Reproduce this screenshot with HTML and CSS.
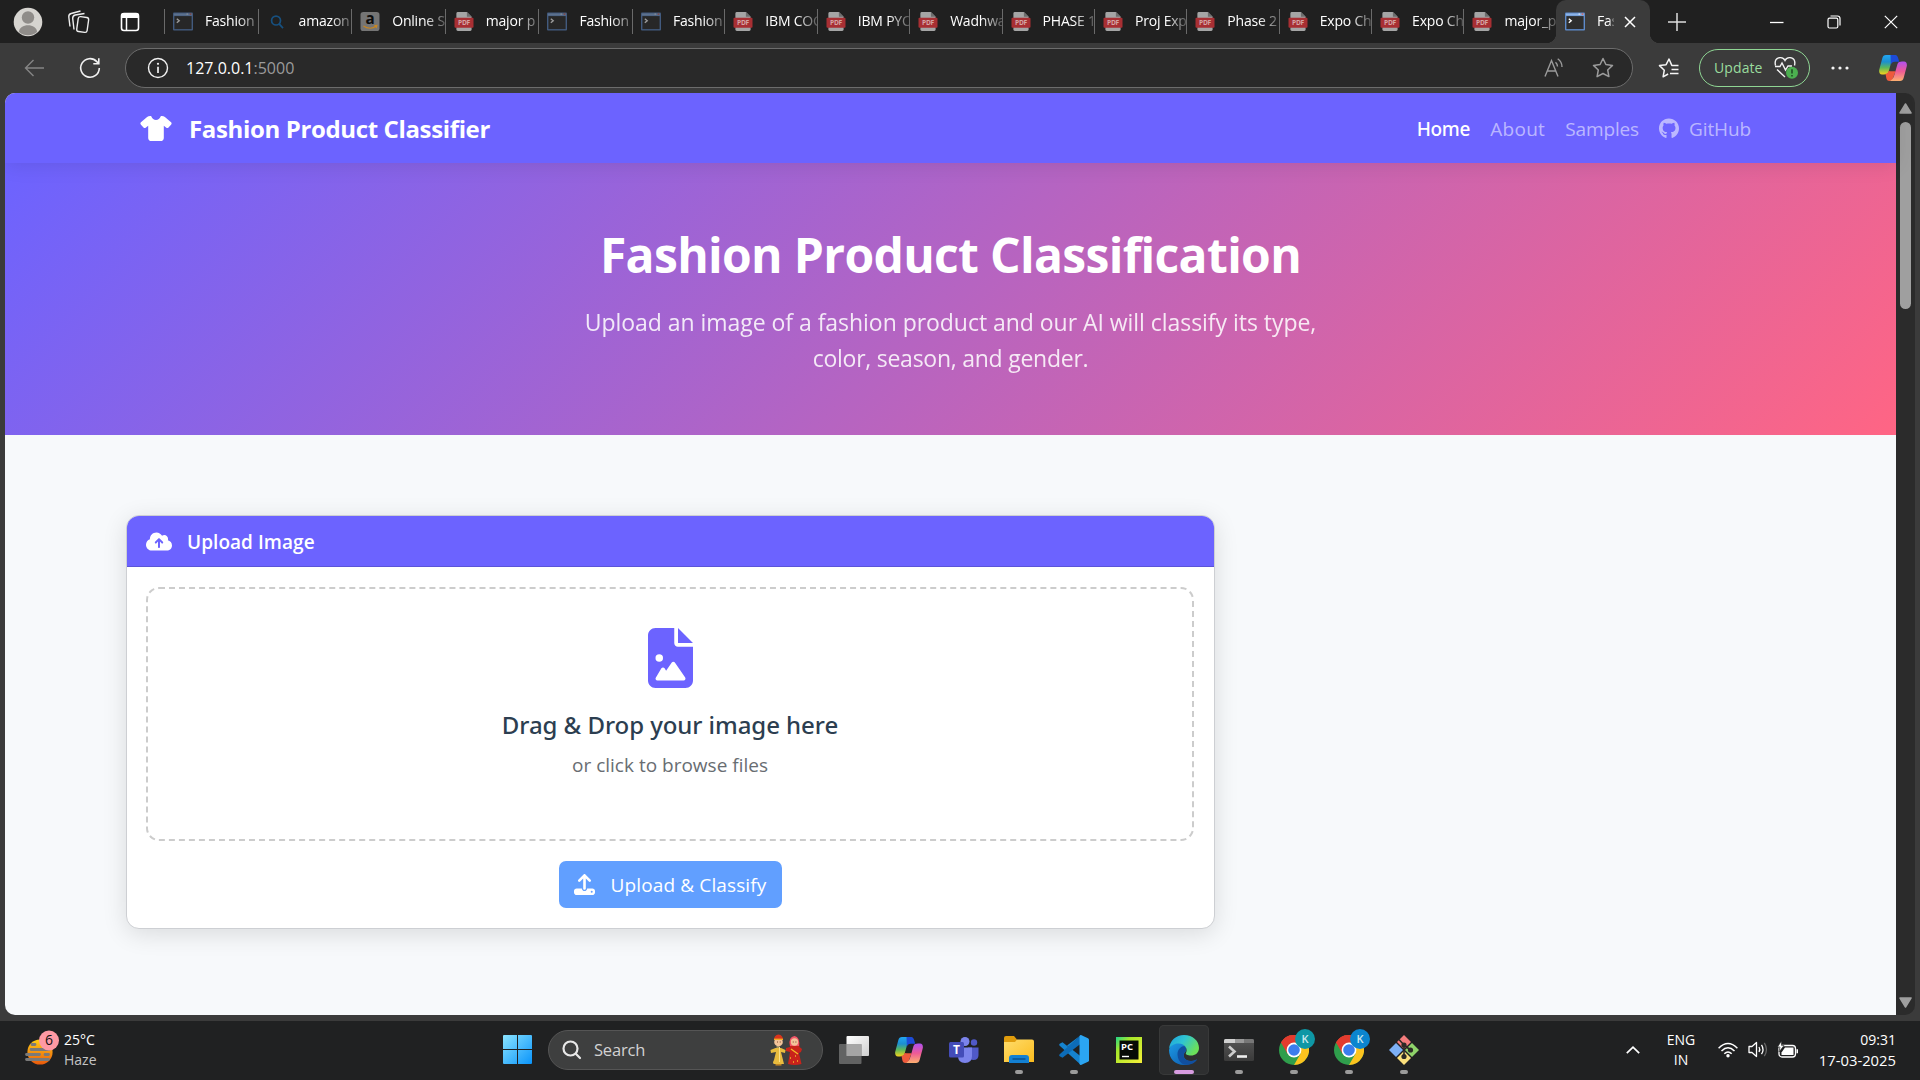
FILE: index.html
```
<!DOCTYPE html>
<html lang="en">
<head>
<meta charset="utf-8">
<title>Fashion Product Classifier</title>
<link rel="stylesheet" href="styles.css">
</head>
<body>
<svg class="defs" width="0" height="0" aria-hidden="true">
  <defs>
    <linearGradient id="cpA" x1="0" y1="0" x2="0" y2="1"><stop offset="0" stop-color="#22a7f2"/><stop offset=".35" stop-color="#1c8fd0"/><stop offset=".65" stop-color="#5cb85a"/><stop offset="1" stop-color="#f6d31c"/></linearGradient>
    <linearGradient id="cpB" x1="0" y1="0" x2="0" y2="1"><stop offset="0" stop-color="#b050f0"/><stop offset=".5" stop-color="#ee5a96"/><stop offset="1" stop-color="#fdb070"/></linearGradient>
    <linearGradient id="sun" x1="0" y1="0" x2="0" y2="1"><stop offset="0" stop-color="#ffcf14"/><stop offset="1" stop-color="#e9590c"/></linearGradient>
    <linearGradient id="win" x1="0" y1="0" x2="1" y2="1"><stop offset="0" stop-color="#8be4ff"/><stop offset="1" stop-color="#0a94fa"/></linearGradient>
    <linearGradient id="tv" x1="0" y1="0" x2="1" y2="1"><stop offset="0" stop-color="#fff"/><stop offset="1" stop-color="#cfcfcf"/></linearGradient>
    <linearGradient id="fold" x1="0" y1="0" x2="1" y2="1"><stop offset="0" stop-color="#ffdc6b"/><stop offset="1" stop-color="#fbbc1e"/></linearGradient>
    <linearGradient id="edgeTop" x1="0" y1="0" x2="1" y2=".5"><stop offset="0" stop-color="#1ba0e2"/><stop offset=".5" stop-color="#30c5d0"/><stop offset="1" stop-color="#6be05a"/></linearGradient>
    <linearGradient id="edgeBody" x1="0" y1="0" x2="1" y2="1"><stop offset="0" stop-color="#1c9be6"/><stop offset="1" stop-color="#0d54a8"/></linearGradient>
    <linearGradient id="pc" x1="0" y1="0" x2="1" y2="1"><stop offset="0" stop-color="#21d789"/><stop offset=".3" stop-color="#a8e82a"/><stop offset="1" stop-color="#f7f03a"/></linearGradient>
    <linearGradient id="term" x1="0" y1="0" x2="0" y2="1"><stop offset="0" stop-color="#555"/><stop offset="1" stop-color="#3a3a3a"/></linearGradient>
  </defs>
  <symbol id="i-console" viewBox="0 0 20 18"><rect width="20" height="18" rx="1" fill="#5e8bcb"/><rect x="1" y="1" width="18" height="2" fill="#8db4e6"/><rect x="13.5" y="1" width="1.5" height="1.2" fill="#dfe9f7"/><rect x="16.6" y="1" width="1.8" height="1.2" fill="#e0523f"/><rect x="1.4" y="3.6" width="17.2" height="13" fill="#2e2e2e"/><path d="M3.8 6.2l2.4 2-2.4 2" fill="none" stroke="#fff" stroke-width="1.4"/></symbol>
  <symbol id="i-pdf" viewBox="0 0 20 20"><path d="M2 1.500a1.500 1.500 0 0 1 1.500-1.500H13l5 5v13.500a1.500 1.500 0 0 1-1.500 1.500H3.500A1.500 1.500 0 0 1 2 18.500z" fill="#a5a5a5"/><path d="M13 0l5 5h-5z" fill="#6d6d6d"/><rect x="0" y="6" width="20" height="10.500" rx="1" fill="#a82f33"/><text x="10" y="13.900" text-anchor="middle" class="pdf-text">PDF</text></symbol>
  <symbol id="i-copilot" viewBox="0 0 28 26"><path d="M7 0H17.500C14 1 13 4.500 11.500 10L9.500 17C8.900 18.800 7 19.500 5 19.500H3C.5 19.500-.3 17 .3 14.500L3.300 3.200C3.900 1 5 0 7 0z" fill="url(#cpA)"/><path d="M11.500 0h4.500c2 0 2.700 1.500 3.200 3.300l1 3.500H16c-2.500 0-3.500 1.200-4.100 3z" fill="#1d4bd8"/><path d="M6.500 18.800c1.800-.3 2.700-1.200 3.100-2.800l2 .2h5L14 23c-.7 2-1.800 3-3.500 3-2 0-2.800-1.200-3.200-3z" fill="#ee5a3c"/><path d="M21 26H10.500C14 25 15 21.500 16.500 16L18.500 9C19.100 7.200 21 6.500 23 6.500H25c2.500 0 3.300 2.500 2.700 5L24.700 22.800C24.100 25 23 26 21 26z" fill="url(#cpB)"/></symbol>
  <symbol id="i-chrome" viewBox="0 0 30 30"><circle cx="15" cy="15" r="15" fill="#2f9e4c"/><path d="M15 15L2 7.500A15 15 0 0 1 28 7.500z" fill="#e33b2e"/><path d="M15 7.500H28A15 15 0 0 1 15 30L21.500 18.700z" fill="#fcc31e"/><path d="M2 7.500L8.500 18.700 15 15V7.500H28A15 15 0 0 0 2 7.500z" fill="#e33b2e"/><circle cx="15" cy="15" r="7.400" fill="#fff"/><circle cx="15" cy="15" r="5.800" fill="#3b7ded"/></symbol>
</svg>

<div class="desktop">
  <header class="tabstrip">
    <div class="strip-tools">
      <svg width="30" height="30" viewBox="0 0 30 30"><circle cx="15" cy="15" r="14.300" fill="#d6d4d0"/><circle cx="15" cy="10.500" r="6.200" fill="#8f8c89"/><path d="M6 25c0-9 18-9 18 0a14 14 0 0 1-18 0z" fill="#8f8c89"/></svg>
      <svg class="collections" width="24" height="26" viewBox="0 0 24 26" fill="none" stroke="#eee" stroke-width="1.400"><rect x="10.500" y="8" width="10.500" height="15" rx="2.200" transform="rotate(8 15.500 15)"/><path d="M7 20.500L5.700 9.500Q5.500 6.700 8.200 6L17.500 4.500M3 17.500L1.800 8Q1.500 5.200 4.200 4.500L13.500 2"/></svg>
      <svg width="20" height="20" viewBox="0 0 20 20"><rect x="1.500" y="1.500" width="17" height="17" rx="2.500" fill="none" stroke="#fff" stroke-width="1.600"/><path d="M1 6V3.500Q1 1 3.500 1h13Q19 1 19 3.500V6z" fill="#fff"/><path d="M6.500 6v12" stroke="#fff" stroke-width="1.500"/></svg>
    </div>
    <nav class="tabs">
      <div class="tab wide"><svg class="fav dim"><use href="#i-console"/></svg><span>Fashion</span></div>
      <div class="tab wide"><svg class="fav" viewBox="0 0 20 20" fill="none" stroke="#17507f" stroke-width="1.800"><circle cx="9" cy="9" r="4.700"/><path d="M12.300 12.500l4 4.500"/></svg><span>amazon</span></div>
      <div class="tab wide"><svg class="fav" viewBox="0 0 20 20"><rect width="20" height="20" rx="3" fill="#757575"/><text x="10" y="13" text-anchor="middle" class="amazon-a">a</text><path d="M3 14.800q7 4.500 13.500.3M14.600 14.400l2.700-.2-.8 2.600" fill="none" stroke="#c88620" stroke-width="1.200"/></svg><span>Online S</span></div>
      <div class="tab wide"><svg class="fav"><use href="#i-pdf"/></svg><span>major p</span></div>
      <div class="tab wide"><svg class="fav dim"><use href="#i-console"/></svg><span>Fashion</span></div>
      <div class="tab"><svg class="fav dim"><use href="#i-console"/></svg><span>Fashion</span></div>
      <div class="tab"><svg class="fav"><use href="#i-pdf"/></svg><span>IBM COG</span></div>
      <div class="tab"><svg class="fav"><use href="#i-pdf"/></svg><span>IBM PYO</span></div>
      <div class="tab"><svg class="fav"><use href="#i-pdf"/></svg><span>Wadhwa</span></div>
      <div class="tab"><svg class="fav"><use href="#i-pdf"/></svg><span>PHASE 1</span></div>
      <div class="tab"><svg class="fav"><use href="#i-pdf"/></svg><span>Proj Exp</span></div>
      <div class="tab"><svg class="fav"><use href="#i-pdf"/></svg><span>Phase 2</span></div>
      <div class="tab"><svg class="fav"><use href="#i-pdf"/></svg><span>Expo Ch</span></div>
      <div class="tab"><svg class="fav"><use href="#i-pdf"/></svg><span>Expo Ch</span></div>
      <div class="tab"><svg class="fav"><use href="#i-pdf"/></svg><span>major_p</span></div>
      <div class="tab active"><svg class="fav"><use href="#i-console"/></svg><span>Fas</span><svg class="close" width="12" height="12" viewBox="0 0 12 12" stroke="#fff" stroke-width="1.500"><path d="M1 1l10 10M11 1L1 11"/></svg></div>
    </nav>
    <svg class="newtab" width="18" height="18" viewBox="0 0 18 18" stroke="#ddd" stroke-width="1.500"><path d="M9 0v18M0 9h18"/></svg>
    <div class="winctl">
      <svg width="14" height="14" viewBox="0 0 14 14" stroke="#fff" stroke-width="1.300"><path d="M0 7.500h13.500"/></svg>
      <svg width="14" height="14" viewBox="0 0 14 14" fill="none" stroke="#fff" stroke-width="1.200"><rect x="1" y="3.200" width="9.800" height="9.800" rx="1.500"/><path d="M3.500 1h7Q13 1 13 3.500v7"/></svg>
      <svg width="14" height="14" viewBox="0 0 14 14" stroke="#fff" stroke-width="1.200"><path d="M.8.800l12.400 12.400M13.200.800L.8 13.200"/></svg>
    </div>
  </header>

  <div class="toolbar">
    <svg class="back" width="21" height="18" viewBox="0 0 21 18" fill="none" stroke="#858585" stroke-width="1.400"><path d="M20 9H1.500M9.500 1L1.500 9l8 8"/></svg>
    <svg class="reload" width="22" height="22" viewBox="0 0 22 22" fill="none" stroke="#f2f2f2" stroke-width="1.600"><path d="M20.300 11A9.300 9.300 0 1 1 17.800 4.600L19.500 6.500M19.800 1.200v5.500h-5.500"/></svg>
    <div class="address">
      <svg width="22" height="22" viewBox="0 0 22 22" fill="none" stroke="#f2f2f2" stroke-width="1.400"><circle cx="11" cy="11" r="9.500"/><path d="M11 9.800v6.200" stroke-width="1.700"/><circle cx="11" cy="6.800" r="1.100" fill="#f2f2f2" stroke="none"/></svg>
      <span class="url">127.0.0.1<i>:5000</i></span>
      <svg class="read" width="20" height="20" viewBox="0 0 20 20" fill="none" stroke="#9b9b9b" stroke-width="1.400"><path d="M1 18.500L7.500 2.500l6.500 16M3.300 13h8.600M11.500 4.200q2 1.800 2 4.300M13.700.800q4.300 3 4.300 8.200"/></svg>
      <svg class="star" width="22" height="22" viewBox="0 0 22 22" fill="none" stroke="#9b9b9b" stroke-width="1.500" stroke-linejoin="round"><path d="M11 1.500l2.900 6 6.600.9-4.800 4.600 1.200 6.600-5.900-3.100-5.900 3.100 1.200-6.600L1.500 8.400l6.600-.9z"/></svg>
    </div>
    <svg class="favs" width="22" height="22" viewBox="0 0 22 22" fill="none" stroke="#f5f5f5" stroke-width="1.500" stroke-linejoin="round"><path d="M20.500 8.400H13.800L11 2 8.100 7.700l-6.600.9 4.800 4.600-1.200 6.600 5-2.800M13.500 12.400h7M12 16.400h8.500"/></svg>
    <div class="update"><span>Update</span><svg width="24" height="22" viewBox="0 0 24 22" fill="none" stroke="#f2f2f2" stroke-width="1.400"><path d="M1.500 8.500C-.5 0 8.500-1.500 11 3.500 13.500-1.500 22.500 0 20.500 8.500M1 9.500h5l2-3.500 3.500 7 2.500-4h4M3 12.500l8 7.500"/><circle cx="18" cy="15.800" r="6" fill="#4caf50" stroke="none"/><path d="M18 12.300v4.200M18 18v1.500" stroke="#1d4720" stroke-width="1.500"/></svg></div>
    <svg class="dots" width="18" height="4" viewBox="0 0 18 4" fill="#f5f5f5"><circle cx="2" cy="2" r="1.600"/><circle cx="9" cy="2" r="1.600"/><circle cx="16" cy="2" r="1.600"/></svg>
    <svg class="copilot" width="28" height="26"><use href="#i-copilot"/></svg>
  </div>

  <main class="viewport">
    <div class="page">
      <div class="navbar">
        <a class="brand"><svg width="32" height="25" viewBox="0 0 640 512" fill="#fff"><path d="M211.800 0c7.800 0 14.300 5.700 16.700 13.200C240.800 51.900 277.100 80 320 80s79.200-28.100 91.500-66.800C413.900 5.700 420.400 0 428.200 0h12.600c22.500 0 44.200 7.900 61.500 22.300L628.500 127.400c6.600 5.500 10.700 13.500 11.400 22.100s-2.100 17.100-7.800 23.600l-56 64c-11.400 13.100-31.200 14.600-44.600 3.500L480 197.700V448c0 35.300-28.700 64-64 64H224c-35.300 0-64-28.700-64-64V197.700l-51.500 42.900c-13.300 11.100-33.100 9.600-44.600-3.500l-56-64c-5.700-6.500-8.500-15-7.800-23.600s4.800-16.600 11.400-22.100L137.700 22.300C155 7.900 176.700 0 199.200 0h12.600z"/></svg>Fashion Product Classifier</a>
        <nav class="links">
          <a class="home">Home</a><a class="about">About</a><a>Samples</a>
          <a class="gh"><svg width="20" height="21" viewBox="0 0 496 512" fill="currentColor"><path d="M244.800 8C106.100 8 0 113.300 0 252c0 110.900 69.800 205.800 169.500 239.200 12.800 2.300 17.300-5.600 17.300-12.100 0-6.200-.3-40.400-.3-61.400 0 0-70 15-84.700-29.800 0 0-11.400-29.100-27.800-36.600 0 0-22.900-15.700 1.600-15.400 0 0 24.900 2 38.600 25.800 21.900 38.600 58.600 27.500 72.900 20.900 2.300-16 8.800-27.100 16-33.700-55.900-6.200-112.300-14.300-112.300-110.500 0-27.500 7.600-41.300 23.600-58.900-2.600-6.500-11.100-33.300 2.600-67.900 20.900-6.500 69 27 69 27 20-5.600 41.500-8.500 62.800-8.500s42.800 2.900 62.800 8.500c0 0 48.100-33.600 69-27 13.700 34.700 5.200 61.400 2.600 67.900 16 17.700 25.800 31.500 25.800 58.900 0 96.500-58.900 104.200-114.800 110.500 9.200 7.900 17 22.900 17 46.400 0 33.700-.3 75.400-.3 83.600 0 6.500 4.600 14.400 17.300 12.100C428.200 457.800 496 362.900 496 252 496 113.300 383.500 8 244.800 8z"/></svg>GitHub</a>
        </nav>
      </div>
      <section class="hero">
        <h1>Fashion Product Classification</h1>
        <p>Upload an image of a fashion product and our AI will classify its type,<br><span class="second">color, season, and gender.</span></p>
      </section>
      <section class="card">
        <div class="card-head"><svg width="26" height="21" viewBox="0 0 640 512" fill="#fff"><path d="M144 480C64.500 480 0 415.500 0 336c0-62.800 40.200-116.200 96.200-135.900c-.1-2.700-.2-5.400-.2-8.100c0-88.400 71.600-160 160-160c59.300 0 111 32.200 138.700 80.200C409.900 102 428.300 96 448 96c53 0 96 43 96 96c0 12.200-2.300 23.800-6.400 34.600C596 238.400 640 290.100 640 352c0 70.700-57.300 128-128 128H144zm79-217c-9.400 9.400-9.400 24.600 0 33.900s24.600 9.400 33.900 0l39-39V392c0 13.300 10.700 24 24 24s24-10.700 24-24V257.900l39 39c9.400 9.400 24.600 9.400 33.900 0s9.400-24.600 0-33.900l-80-80c-9.400-9.400-24.600-9.400-33.900 0l-80 80z"/></svg><span>Upload Image</span></div>
        <div class="card-body">
          <div class="dropzone">
            <svg width="45" height="60" viewBox="0 0 384 512" fill="#6c63ff"><path d="M64 0C28.700 0 0 28.700 0 64V448c0 35.300 28.700 64 64 64H320c35.300 0 64-28.700 64-64V160H256c-17.700 0-32-14.300-32-32V0H64zM256 0V128H384L256 0zM64 256a32 32 0 1 1 64 0 32 32 0 1 1 -64 0zm152 32c5.300 0 10.200 2.600 13.200 6.900l88 128c3.400 4.900 3.700 11.300 1 16.500s-8.200 8.600-14.200 8.600H216 176 128 80c-5.800 0-11.100-3.100-13.900-8.100s-2.800-11.200 .2-16.100l48-80c2.900-4.800 8.100-7.800 13.700-7.800s10.800 2.900 13.700 7.800l12.800 21.400 48.300-70.200c3-4.300 7.900-6.900 13.200-6.900z"/></svg>
            <h2>Drag &amp; Drop your image here</h2>
            <p>or click to browse files</p>
          </div>
          <button class="submit"><svg width="21" height="21" viewBox="0 0 512 512" fill="#fff"><path d="M288 109.300V352c0 17.700-14.300 32-32 32s-32-14.300-32-32V109.300l-73.400 73.400c-12.500 12.500-32.800 12.500-45.300 0s-12.500-32.800 0-45.300l128-128c12.500-12.500 32.800-12.500 45.300 0l128 128c12.500 12.500 12.500 32.800 0 45.300s-32.800 12.500-45.300 0L288 109.300zM64 352H192c0 35.300 28.700 64 64 64s64-28.700 64-64H448c35.300 0 64 28.700 64 64v32c0 35.300-28.700 64-64 64H64c-35.300 0-64-28.700-64-64V416c0-35.300 28.700-64 64-64zM432 456a24 24 0 1 0 0-48 24 24 0 1 0 0 48z"/></svg><span>Upload &amp; Classify</span></button>
        </div>
      </section>
    </div>
    <div class="scrollbar">
      <svg width="13" height="11" viewBox="0 0 13 11"><path d="M6.500 1L12 10H1z" fill="#9f9f9f" stroke="#9f9f9f" stroke-linejoin="round" stroke-width="1.500"/></svg>
      <div class="thumb"></div>
      <svg class="down" width="13" height="11" viewBox="0 0 13 11"><path d="M6.500 10L12 1H1z" fill="#9f9f9f" stroke="#9f9f9f" stroke-linejoin="round" stroke-width="1.500"/></svg>
    </div>
  </main>

  <footer class="taskbar">
    <div class="weather">
      <svg width="36" height="36" viewBox="0 0 36 36"><circle cx="16" cy="22" r="12.600" fill="url(#sun)"/><path d="M8 14.500h3M7 19.500h18M2.500 24.500h13M21 24.500h3.500M2.500 29.500h22" stroke="#7a7a7a" stroke-width="2.800" stroke-linecap="round"/><circle cx="25" cy="10.500" r="10" fill="#ff99a4"/><text x="25" y="15.300" text-anchor="middle" class="badge-num">6</text></svg>
      <div class="weather-text"><span>25°C</span><span class="mute">Haze</span></div>
    </div>
    <div class="apps">
      <div class="app"><svg width="29" height="29" viewBox="0 0 29 29"><path d="M0 1q0-1 1-1h13v14H0zM15 0h13q1 0 1 1v13H15zM0 15h14v14H1q-1 0-1-1zM15 15h14v13q0 1-1 1H15z" fill="url(#win)"/></svg></div>
      <div class="search"><svg width="20" height="20" viewBox="0 0 20 20" fill="none" stroke="#e8e8e8" stroke-width="2.200" stroke-linecap="round"><circle cx="8.500" cy="8.500" r="7"/><path d="M13.800 13.800L18 18"/></svg><span>Search</span>
        <svg class="couple" width="32" height="32" viewBox="0 0 32 32"><path d="M4 30q-2-1 0-4l2-8-5 1-.5-3 5-2h5.500l4.500 2-.5 3-4-1 3 12z" fill="#e8bb3e"/><path d="M6.500 13h3v15" stroke="#fbe08a" fill="none"/><circle cx="8.500" cy="8" r="4.300" fill="#f3c39a"/><path d="M4 6q0-5 4.500-5.500Q13 1 13 6z" fill="#d9341c"/><path d="M4 5.300h9" stroke="#f4b728" stroke-width="1.300"/><path d="M5.500 30.800h6" stroke="#c98a24" stroke-width="1.500"/><path d="M18 30l2-12-4-1v-3l4-1q-2-9 4.500-10.500Q30 3 29.500 13l2.500 2-1 3-2 1 2.500 11q-7 2-13.500 0z" fill="#c9231b"/><path d="M20 12q-2-9 4.500-10Q30 3 29 12z" fill="#f0566a"/><circle cx="24.500" cy="8" r="3.700" fill="#f3c39a"/><path d="M21 15l7 5M20 24h1M25 22h1M23 28h1M27 27h1" stroke="#f4b728" stroke-width="1.400"/><path d="M7 8h.8M9.800 8h.8M22.800 8h.8M25.500 8h.8" stroke="#5a2b18"/></svg></div>
      <div class="app"><svg width="30" height="28" viewBox="0 0 30 28"><rect x="7.500" y="0" width="22.500" height="20" rx="1" fill="url(#tv)"/><rect x="0" y="8" width="22.500" height="20" rx="1" fill="#6e6e6e" opacity=".85"/><path d="M7.500 8h15v12h-15z" fill="#a5a5a5"/></svg></div>
      <div class="app"><svg width="28" height="26"><use href="#i-copilot"/></svg></div>
      <div class="app"><svg width="30" height="28" viewBox="0 0 30 28"><circle cx="16" cy="5.500" r="4.500" fill="#7b83eb"/><circle cx="25" cy="6.500" r="3.200" fill="#5059c9"/><path d="M19 11.500h10.500V19q0 5-5 5-4 0-5.500-4z" fill="#5059c9"/><path d="M9 11.500h14V20q0 7-7 7t-7-7z" fill="#7b83eb"/><rect x="0" y="6" width="15" height="15.500" rx="1.500" fill="#444cb8"/><text x="7.500" y="18" text-anchor="middle" class="teams-t">T</text></svg></div>
      <div class="app run"><svg width="30" height="27" viewBox="0 0 30 27"><path d="M0 2q0-2 2-2h8l3 3.500V9H0z" fill="#e09c0c"/><path d="M0 6h11l2-2.500h15q2 0 2 2V26H0z" fill="url(#fold)"/><path d="M5 27v-5q0-3 3-3h14q3 0 3 3v5z" fill="#1380d2"/><path d="M8.500 23h13" stroke="#0b5494" stroke-width="1.600"/></svg></div>
      <div class="app run"><svg width="30" height="30" viewBox="0 0 30 30"><path d="M22 0L9.500 12 3.500 7.300.7 8.800Q-.3 9.700.7 10.700L22 30V21.500L8 10.500z" fill="#1583cf"/><path d="M22 8.500L3.500 22.700.7 21.200q-1-.9 0-1.900L22 0z" fill="#0d6cb8"/><path d="M22 0l7 3.200q1 .5 1 1.500v20.600q0 1-1 1.500L22 30q-1 0-1.500-1V1q.5-1 1.500-1z" fill="#2ba5f2"/></svg></div>
      <div class="app"><svg width="26" height="26" viewBox="0 0 26 26"><path d="M0 0h26v26H0z" fill="url(#pc)"/><path d="M3.500 3.500h19v19h-19z" fill="#070a06"/><text x="5" y="13.200" class="pc-text">PC</text><path d="M6 19.500h7" stroke="#fff" stroke-width="1.400"/></svg></div>
      <div class="app current"><svg width="30" height="30" viewBox="0 0 30 30"><path d="M0 15C2 8 8 6.500 12 8c5 2 6 6 4.500 8.500-4 4-1 10 6 9.500 2.500 0 4.500-1.500 5.500-1.500C25 28.500 20 30 15 30 6 30 0 23.500 0 15z" fill="url(#edgeBody)"/><path d="M8.500 19c0-5 4-8 7-8 2 1.500 2 4 1 5.500-4 4-1 10 6 9.500 2.500 0 4.500-1.500 5.500-1.500-3.500 5-8 5.500-12 5.300C11.500 29 8.500 24 8.500 19z" fill="#114f9f"/><path d="M0 14C.8 5.500 7 0 15 0c9 0 15 6 15 13 0 5-4 7.500-8 7.500-3.500 0-6-1.300-5-2.800 2-3-.5-9-7.500-9.200C5 8.400 1.500 11 0 14z" fill="url(#edgeTop)"/></svg></div>
      <div class="app run"><svg width="30" height="22" viewBox="0 0 30 22"><rect width="30" height="22" rx="1.500" fill="url(#term)"/><path d="M0 4V1.500Q0 0 1.500 0H11v4z" fill="#d0d0d0"/><path d="M11 0h9v4h-9z" fill="#999"/><path d="M20 0h8.500Q30 0 30 1.500V4H20z" fill="#777"/><path d="M5 7.500l5.500 5L5 17.500" fill="none" stroke="#ccc" stroke-width="2.600"/><path d="M13 17.500h10" stroke="#eee" stroke-width="2.600"/></svg></div>
      <div class="app run"><svg width="30" height="30"><use href="#i-chrome"/></svg><b class="kbadge teal">K</b></div>
      <div class="app run"><svg width="30" height="30"><use href="#i-chrome"/></svg><b class="kbadge blue">K</b></div>
      <div class="app run"><svg width="30" height="30" viewBox="0 0 30 30"><path d="M15 0l7 7-7 7-7-7z" fill="#f47c7c"/><path d="M23 8l7 7-7 7-7-7z" fill="#8fd36a"/><path d="M7 8l7 7-7 7-7-7z" fill="#7db0f5"/><path d="M15 16l7 7-7 7-7-7z" fill="#fbe07c"/><path d="M10 4.500l5 5.500v12M15 10l6.500 5" fill="none" stroke="#2c2a26" stroke-width="1.600"/><g fill="#2c2a26"><circle cx="15" cy="10" r="2.600"/><circle cx="15" cy="21.500" r="2.600"/><circle cx="21.500" cy="15" r="2.600"/></g></svg></div>
    </div>
    <div class="tray">
      <svg class="chev" width="14" height="8" viewBox="0 0 14 8" fill="none" stroke="#fff" stroke-width="1.700"><path d="M.8 7.200L7 1.200l6.200 6"/></svg>
      <div class="lang"><span>ENG</span><span>IN</span></div>
      <svg class="wifi" width="20" height="16" viewBox="0 0 20 16" fill="none" stroke="#fff" stroke-width="1.500"><path d="M.6 6.200q9.400-9.400 18.800 0M3.500 9q6.500-6.500 13 0M6.300 11.800q3.700-3.700 7.400 0"/><circle cx="10" cy="13.700" r="1.700" fill="#fff" stroke="none"/></svg>
      <svg class="vol" width="21" height="17" viewBox="0 0 21 17" fill="none" stroke="#fff" stroke-width="1.300"><path d="M1 5.500h3L8.500 1.500v14L4 11.500H1z" stroke-linejoin="round"/><path d="M11 6q1.600 2.500 0 5M13.500 3.800q3 4.700 0 9.400"/><path d="M16.300 1.800q4.300 6.700 0 13.400" stroke="#666"/></svg>
      <svg class="bat" width="22" height="18" viewBox="0 0 22 18"><rect x="2" y="4.500" width="16.500" height="11.500" rx="3" fill="none" stroke="#fff" stroke-width="1.300"/><path d="M8 6.500h8.500v7.500h-12v-2.500z" fill="#fff"/><path d="M19.500 8.300h1.500v4h-1.500z" fill="#fff"/><path d="M4.500 0L.5 6h2.500L2 11l5-6.500H4.500z" fill="#fff" stroke="#202122" stroke-width=".6"/></svg>
      <div class="clock"><span>09:31</span><span class="date">17-03-2025</span></div>
    </div>
  </footer>
</div>
</body>
</html>
```
FILE: styles.css
```
* { box-sizing: border-box; }
body { margin: 0; background: #3b3b3b; font-family: "Open Sans", "Noto Sans", sans-serif; }
svg { display: block; flex: none; }
h1, h2, p { margin: 0; }
.defs { position: absolute; }
.desktop { width: 1920px; height: 1080px; overflow: hidden; display: flex; flex-direction: column; }

/* tab strip */
.tabstrip { height: 43px; flex: none; background: #202020; display: flex; align-items: center; }
.strip-tools { width: 164px; flex: none; padding: 0 24px 0 13px; display: flex; align-items: center; justify-content: space-between; }
.collections { margin-left: -6px; }
.tabs { display: flex; flex: none; height: 43px; }
.tab { position: relative; width: 92.4px; padding-left: 9px; display: flex; align-items: center; gap: 12px; color: #fff; font-size: 14px; letter-spacing: -.2px; }
.tab.wide { width: 93.6px; }
.tab::before { content: ""; position: absolute; left: 0; top: 9px; width: 1px; height: 25px; background: #6a6a6a; }
.tab span { flex: 1; min-width: 0; overflow: hidden; white-space: nowrap; line-height: 42px; margin-top: -2px; -webkit-mask-image: linear-gradient(90deg, #000 60%, rgba(0,0,0,.25)); mask-image: linear-gradient(90deg, #000 60%, rgba(0,0,0,.25)); }
.fav { width: 20px; height: 19px; }
.fav.dim { opacity: .55; }
.tab.active { background: #3b3b3b; border-radius: 10px 10px 0 0; width: 94px; padding-right: 14px; }
.tab.active::before { left: -10px; top: 33px; width: 10px; height: 10px; background: radial-gradient(circle at 0 0, #202020 10px, #3b3b3b 10.5px); }
.tab.active::after { content: ""; position: absolute; right: -10px; top: 33px; width: 10px; height: 10px; background: radial-gradient(circle at 100% 0, #202020 10px, #3b3b3b 10.5px); }
.tab.active span { -webkit-mask-image: linear-gradient(90deg, #000 70%, rgba(0,0,0,.2)); mask-image: linear-gradient(90deg, #000 70%, rgba(0,0,0,.2)); }
.close { margin-left: -2px; }
.newtab { margin-left: 18px; }
.winctl { flex: 1; display: flex; justify-content: flex-end; gap: 43px; padding-right: 22px; }
.pdf-text { font: 700 7px "Open Sans", sans-serif; fill: #d5a5a5; }
.amazon-a { font: 700 16px "Open Sans", sans-serif; fill: #0c0c0c; }

/* toolbar */
.toolbar { height: 50px; flex: none; display: flex; align-items: center; padding-left: 24px; background: #3b3b3b; }
.reload { margin-left: 34px; }
.address { margin-left: 24px; width: 1508px; height: 40px; border: 1px solid #6c6c6c; border-radius: 20px; background: #292929; display: flex; align-items: center; padding: 0 18px 0 21px; }
.url { margin: -1px 0 0 17px; flex: 1; color: #fff; font-size: 16px; }
.url i { font-style: normal; color: #9b9b9b; }
.star { margin-left: 28px; }
.favs { margin-left: 25px; }
.update { margin-left: 19px; width: 111px; height: 38px; border: 1.5px solid #8fd694; border-radius: 19px; display: flex; align-items: center; padding-left: 14px; gap: 11px; color: #9adb9e; font-size: 14px; }
.update span { margin-top: -2px; letter-spacing: .1px; }
.dots { margin-left: 21px; }
.copilot { margin-left: 30px; }

/* browser viewport */
.viewport { height: 922px; margin: 0 5px; flex: none; display: flex; border-radius: 10px; overflow: hidden; }
.page { width: 1891px; background: #f7f9fb; }
.scrollbar { flex: 1; background: #2b2b2b; display: flex; flex-direction: column; align-items: center; padding: 10px 0 7px; }
.thumb { margin-top: 8px; width: 11px; height: 187px; border-radius: 6px; background: #9f9f9f; }
.down { margin-top: auto; }

.navbar { position: relative; height: 70px; background: #6c63ff; display: flex; align-items: center; justify-content: space-between; padding: 0 145px 0 135px; box-shadow: 0 2px 19px rgba(0,0,0,.1); }
.brand { display: flex; align-items: center; gap: 17px; color: #fff; font-size: 24px; font-weight: 700; letter-spacing: -.36px; }
.links { display: flex; align-items: center; gap: 20px; padding-top: 1px; font-size: 19px; letter-spacing: -.12px; color: rgba(255,255,255,.55); }
.links .home { color: #fff; font-family: "Noto Sans", sans-serif; font-weight: 500; letter-spacing: -.3px; }
.links .about { letter-spacing: .3px; }
.gh { display: flex; align-items: center; gap: 10px; }

.hero { height: 272px; padding-top: 62px; text-align: center; color: #fff; background: linear-gradient(135deg, #6c63ff 0%, #ff6584 100%); }
.hero h1 { font-size: 48px; line-height: 60px; font-weight: 700; letter-spacing: -.66px; }
.hero p { margin-top: 19px; font-size: 23px; line-height: 36px; letter-spacing: -.04px; opacity: .86; }
.second { letter-spacing: -.25px; }

.card { margin: 80px 0 0 121px; width: 1089px; height: 414px; border: 1px solid #cdcfd3; border-radius: 13px; overflow: hidden; background: #fff; box-shadow: 0 5px 25px rgba(0,0,0,.12); }
.card-head { height: 51px; background: #6c63ff; border-bottom: 1px solid #5b54d8; display: flex; align-items: center; gap: 15px; padding-left: 19px; color: #fff; font-size: 19px; font-weight: 600; }
.card-head span { padding-top: 2px; letter-spacing: .05px; }
.card-body { padding: 20px 20px 20px 19px; display: flex; flex-direction: column; align-items: center; gap: 20px; }
.dropzone { align-self: stretch; height: 254px; border: 2px dashed #ccc; border-radius: 13px; padding-top: 39px; display: flex; flex-direction: column; align-items: center; }
.dropzone h2 { margin-top: 22px; font-family: "Noto Sans", sans-serif; font-size: 24px; line-height: 30px; font-weight: 500; letter-spacing: -.06px; color: #2c3e50; }
.dropzone p { margin-top: 10px; font-size: 19px; line-height: 30px; color: #686d72; }
.submit { width: 223px; height: 47px; border: 0; border-radius: 7px; background: #619fff; color: #fff; display: flex; align-items: center; justify-content: center; gap: 16px; padding: 0; font: 400 19px "Open Sans", sans-serif; letter-spacing: .13px; }
.submit span { padding-top: 1px; }

/* taskbar */
.taskbar { margin-top: 6px; height: 59px; flex: none; background: #202122; display: flex; align-items: center; padding-bottom: 2px; font-size: 14px; line-height: 20px; color: #fff; }
.weather { width: 490px; padding-left: 24px; display: flex; align-items: center; gap: 4px; }
.weather svg { margin-top: -3px; }
.weather-text { display: flex; flex-direction: column; }
.mute { color: #c4c4c4; }
.badge-num { font: 14px "Open Sans", sans-serif; fill: #111; }
.apps { display: flex; align-items: center; }
.app { position: relative; width: 55px; height: 50px; display: flex; align-items: center; justify-content: center; }
.app.run::after, .app.current::after { content: ""; position: absolute; bottom: 1px; width: 8px; height: 4px; border-radius: 2px; background: #9b9b9b; }
.app.current { width: 50px; margin: 0 2.5px; border-radius: 5px; background: #2e2f30; box-shadow: inset 0 0 0 1px #383939; }
.app.current::after { width: 20px; background: #d79ce0; }
.search { width: 275px; height: 40px; margin: 0 3px; border-radius: 20px; border: 1px solid #555; background: #3e3f3f; display: flex; align-items: center; padding: 0 20px 0 13px; font-size: 16.5px; color: #d2d2d2; letter-spacing: -.2px; }
.search span { margin-left: 12px; flex: 1; }
.kbadge { position: absolute; left: 29px; top: 4px; width: 20px; height: 20px; border-radius: 50%; font-size: 11px; font-weight: 600; text-align: center; color: #cfe9ee; }
.teal { background: #0e97a5; }
.blue { background: #0b85cf; }
.teams-t { font: 700 12px "Open Sans", sans-serif; fill: #fff; }
.pc-text { font: 700 9.5px "Open Sans", sans-serif; fill: #fff; }
.tray { flex: 1; display: flex; align-items: center; justify-content: flex-end; padding-right: 24px; }
.lang { margin-left: 26px; width: 30px; display: flex; flex-direction: column; align-items: center; }
.wifi { margin-left: 22px; }
.vol { margin-left: 10px; }
.bat { margin-left: 8px; }
.clock { width: 97px; display: flex; flex-direction: column; align-items: flex-end; }
.date { font-size: 14.8px; }
```
